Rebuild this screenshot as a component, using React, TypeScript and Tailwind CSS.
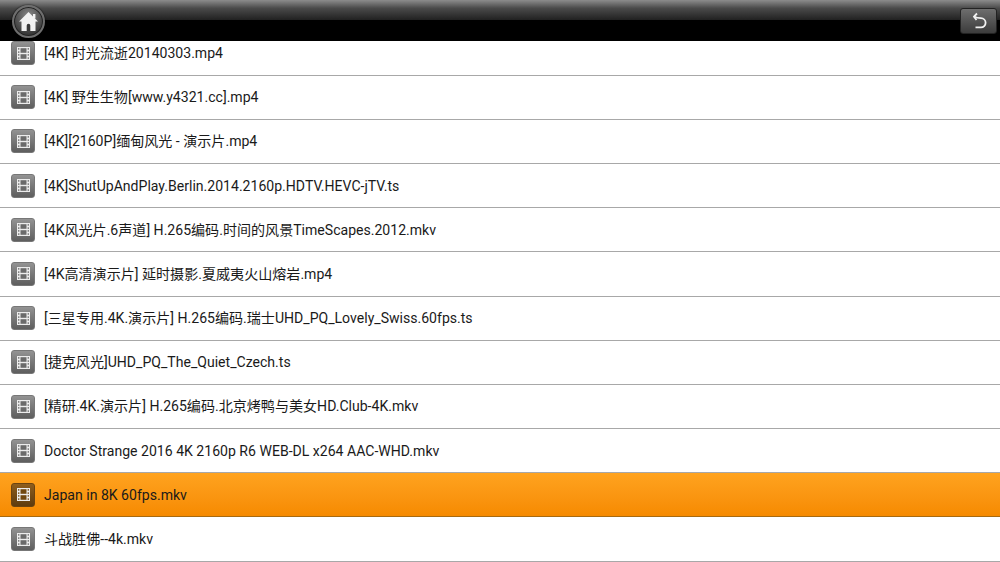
const files = [
  '[4K] 时光流逝20140303.mp4',
  '[4K] 野生生物[www.y4321.cc].mp4',
  '[4K][2160P]缅甸风光 - 演示片.mp4',
  '[4K]ShutUpAndPlay.Berlin.2014.2160p.HDTV.HEVC-jTV.ts',
  '[4K风光片.6声道] H.265编码.时间的风景TimeScapes.2012.mkv',
  '[4K高清演示片] 延时摄影.夏威夷火山熔岩.mp4',
  '[三星专用.4K.演示片] H.265编码.瑞士UHD_PQ_Lovely_Swiss.60fps.ts',
  '[捷克风光]UHD_PQ_The_Quiet_Czech.ts',
  '[精研.4K.演示片] H.265编码.北京烤鸭与美女HD.Club-4K.mkv',
  'Doctor Strange 2016 4K 2160p R6 WEB-DL x264 AAC-WHD.mkv',
  'Japan in 8K 60fps.mkv',
  '斗战胜佛--4k.mkv',
]

const FilmIcon = ({ active }: { active: boolean }) => {
  const ink = active ? '#70480f' : '#6a6a6a'
  return (
    <div
      className={`w-[24px] h-[24px] shrink-0 rounded-[3px] flex items-center justify-center border ${
        active
          ? 'border-[#6b4310] bg-gradient-to-b from-[#8e5e1e] to-[#5e3b0e]'
          : 'border-[#777] bg-gradient-to-b from-[#939393] to-[#5e5e5e]'
      }`}
    >
      <svg width="15" height="15" viewBox="0 0 15 15">
        <rect x="1" y="1" width="13" height="13" fill="#ececec" />
        <rect x="4.5" y="2.2" width="6" height="4.6" fill={ink} />
        <rect x="4.5" y="8.2" width="6" height="4.6" fill={ink} />
        <g fill={ink}>
          <rect x="2" y="2.2" width="1.4" height="1.4" />
          <rect x="2" y="5.4" width="1.4" height="1.4" />
          <rect x="2" y="8.2" width="1.4" height="1.4" />
          <rect x="2" y="11.4" width="1.4" height="1.4" />
          <rect x="11.6" y="2.2" width="1.4" height="1.4" />
          <rect x="11.6" y="5.4" width="1.4" height="1.4" />
          <rect x="11.6" y="8.2" width="1.4" height="1.4" />
          <rect x="11.6" y="11.4" width="1.4" height="1.4" />
        </g>
      </svg>
    </div>
  )
}

const HomeButton = () => (
  <button className="w-[33px] h-[33px] mt-[1px] rounded-full border-[2px] border-[#6e6e6e] bg-[radial-gradient(circle_at_50%_30%,#8a8a8a_0%,#4c4c4c_55%,#1c1c1c_100%)] flex items-center justify-center shadow-[0_0_2px_#000,inset_0_0_0_1px_#222]">
    <svg width="21" height="21" viewBox="0 0 21 21">
      <path d="M10.5 1 L20 10.5 L17.5 10.5 L17.5 20 L3.5 20 L3.5 10.5 L1 10.5 Z" fill="#f2f2f2" />
      <rect x="15" y="3" width="2.4" height="4.5" fill="#f2f2f2" />
      <path d="M8.7 20 V14.5 A1.8 1.8 0 0 1 12.3 14.5 V20 Z" fill="#3a3a3a" />
    </svg>
  </button>
)

const BackButton = () => (
  <button className="w-[37px] h-[26px] mt-[1px] rounded-[3px] border border-[#222] bg-gradient-to-b from-[#6e6e6e] to-[#3c3c3c] flex items-center justify-center">
    <svg width="16" height="18" viewBox="0 0 16 18" fill="none" stroke="#f2f2f2" strokeWidth="1.8">
      <path d="M3 4.5 C6 6.2 8 6.2 10 6.2 A4.6 4.6 0 0 1 10 15.4 H4.5" />
      <path d="M6 1.5 L3 4.5 L5.5 8" />
    </svg>
  </button>
)

export default function App() {
  return (
    <div className="w-[1000px] h-[562px] overflow-hidden bg-white [font-variant-ligatures:none]" style={{ fontFamily: 'Roboto, "Noto Sans CJK SC", sans-serif' }}>
      <header className="relative z-10 h-[41px] flex items-center justify-between pl-[12px] pr-[3px] bg-[linear-gradient(to_bottom,#8c8c8c_0%,#4a4a4a_20%,#222_48%,#000_50%,#000_100%)]">
        <HomeButton />
        <BackButton />
      </header>
      <ul className="-mt-[9.6px]">
        {files.map((name, i) => {
          const active = i === 10
          return (
            <li
              key={name}
              className={`h-[44.2px] flex items-center gap-[9px] pl-[11px] border-b ${
                active ? 'bg-gradient-to-b from-[#ffa31e] to-[#f68a00] border-[#a86a10]' : 'bg-white border-[#a8a8a8]'
              }`}
            >
              <FilmIcon active={active} />
              <span className="text-[14.07px] text-[#1a1a1a] whitespace-nowrap pt-[1px]">{name}</span>
            </li>
          )
        })}
      </ul>
    </div>
  )
}
